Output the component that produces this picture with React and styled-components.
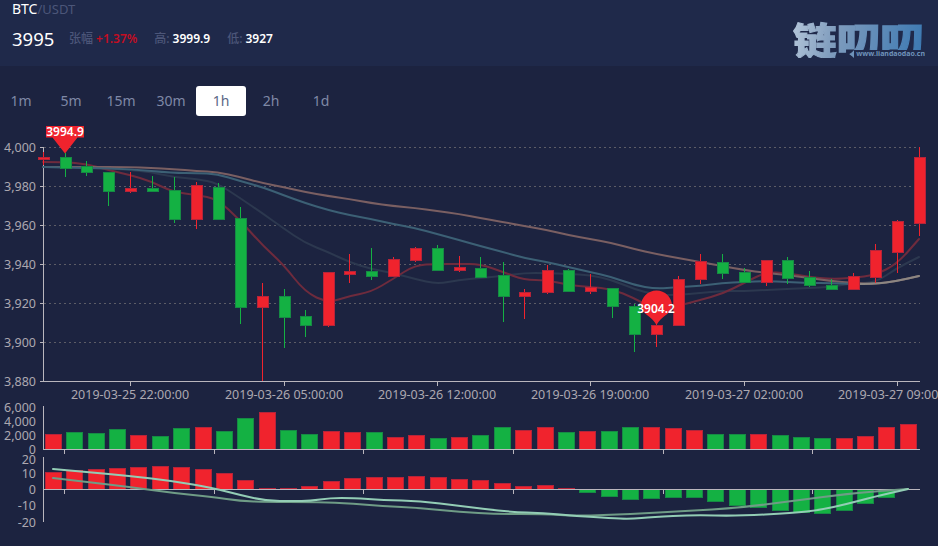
import React from "react";
import styled, { createGlobalStyle } from "styled-components";

const RED = "#f0232d";
const GREEN = "#14b143";
const FONT = `"Noto Sans", "Noto Sans CJK SC", sans-serif`;

const GlobalStyle = createGlobalStyle`
  html, body {
    margin: 0;
    padding: 0;
    background: #1c2340;
    font-family: ${FONT};
    overflow: hidden;
  }
`;

const Page = styled.div`
  width: 938px;
  height: 546px;
  overflow: hidden;
  background: #1c2340;
`;
const Header = styled.header`
  height: 66px;
  box-sizing: border-box;
  padding: 0 12px;
  background: #1f294a;
  display: flex;
  justify-content: space-between;
`;
const Ticker = styled.div`
  display: flex;
  flex-direction: column;
`;
const Pair = styled.div`
  height: 19px;
  line-height: 18px;
  font-size: 14px;
  color: #fff;
  span {
    font-size: 13px;
    color: #4c5679;
  }
`;
const Stats = styled.div`
  margin-top: 8px;
  height: 22px;
  display: flex;
  align-items: center;
  font-size: 12px;
  color: #4c5679;
`;
const Price = styled.div`
  width: 57px;
  font-size: 18.5px;
  color: #fff;
`;
const Stat = styled.div`
  margin-right: 17px;
  font-weight: 500;
  b {
    font-weight: 600;
    margin-left: 3px;
    color: ${(p) => (p.$up ? "#c40d22" : "#fff")};
  }
`;
const Logo = styled.div`
  position: relative;
  margin: 20px 1px 0 0;
  width: 132px;
  height: 38px;
  overflow: hidden;
`;
const LogoMark = styled.div`
  width: fit-content;
  font-size: 37px;
  line-height: 38px;
  font-weight: 900;
  font-family: "Noto Sans CJK SC", sans-serif;
  white-space: nowrap;
  transform: scaleX(1.18);
  transform-origin: left center;
  -webkit-text-stroke: 1px transparent;
  background: linear-gradient(100deg, #b4c6da 0%, #7f9cbd 32%, #3a78b2 100%);
  -webkit-background-clip: text;
  background-clip: text;
  color: transparent;
`;
const LogoUrl = styled.div`
  position: absolute;
  right: 0;
  bottom: 0;
  font-size: 7px;
  line-height: 8px;
  font-weight: 700;
  color: #6f93bb;
  background: #1f294a;
  padding-left: 2px;
`;
const Toolbar = styled.nav`
  display: flex;
  margin: 20px 0 4px -4px;
`;
const Tab = styled.div`
  width: 50px;
  height: 30px;
  line-height: 30px;
  text-align: center;
  font-size: 14px;
  border-radius: 3px;
  color: ${(p) => (p.$active ? "#5b6686" : "#7f88a6")};
  background: ${(p) => (p.$active ? "#fff" : "transparent")};
`;
const Chart = styled.svg`
  display: block;
  overflow: visible;
`;
const AxisText = styled.text`
  font-size: 12.5px;
  fill: #aca8b0;
`;
const AxisLine = styled.path`
  fill: none;
  stroke: #b9b6bd;
  stroke-width: 1;
  shape-rendering: crispEdges;
`;
const GridLine = styled.line`
  stroke: #5c5c66;
  stroke-width: 1;
  stroke-dasharray: 2 3;
  shape-rendering: crispEdges;
`;
const Curve = styled.path`
  fill: none;
  stroke-width: 2;
  stroke-linejoin: round;
  stroke-linecap: round;
  stroke: ${(p) => p.$color};
`;
const Wick = styled.line`
  stroke: ${(p) => (p.$up ? RED : GREEN)};
  stroke-width: 1;
  shape-rendering: crispEdges;
`;
const Bar = styled.rect`
  fill: ${(p) => (p.$up ? RED : GREEN)};
  stroke: ${(p) => (p.$up ? "#b5243a" : "#168a45")};
  stroke-width: 1;
  shape-rendering: crispEdges;
`;
const PinShape = styled.path`
  fill: ${RED};
`;
const PinText = styled.text`
  font-size: 12px;
  font-weight: 600;
  fill: #fff;
  text-anchor: middle;
`;

const TABS = ["1m", "5m", "15m", "30m", "1h", "2h", "1d"];

// x, high, low, body top, body bottom, up
const CANDLES = [
  [43, 152, 165, 157, 159, 1], [65, 153, 177, 157, 168, 0], [86, 161, 176, 166, 172, 0],
  [108, 172, 206, 172, 191, 0], [130, 172, 193, 188, 191, 1], [152, 176, 192, 188, 191, 0],
  [174, 177, 223, 190, 219, 0], [196, 182, 229, 185, 219, 1], [218, 183, 220, 187, 219, 0],
  [240, 207, 324, 218, 307, 0], [262, 283, 381, 296, 307, 1], [284, 289, 348, 296, 317, 0],
  [305, 310, 337, 316, 325, 0], [328, 272, 327, 272, 325, 1], [349, 254, 283, 271, 274, 1],
  [371, 248, 280, 271, 276, 0], [393, 257, 276, 259, 276, 1], [415, 247, 262, 248, 260, 1],
  [437, 245, 270, 248, 270, 0], [459, 256, 272, 267, 270, 1], [480, 257, 277, 268, 277, 0],
  [503, 262, 322, 275, 296, 0], [524, 289, 319, 292, 296, 1], [547, 265, 294, 270, 292, 1],
  [568, 269, 291, 270, 291, 0], [590, 274, 294, 287, 291, 1], [612, 288, 318, 288, 306, 0],
  [634, 304, 352, 306, 334, 0], [656, 324, 347, 325, 334, 1], [678, 276, 326, 279, 325, 1],
  [700, 254, 284, 261, 279, 1], [722, 254, 279, 262, 273, 0], [744, 268, 282, 272, 282, 0],
  [766, 260, 286, 260, 282, 1], [787, 257, 284, 260, 278, 0], [809, 271, 287, 277, 285, 0],
  [831, 279, 289, 285, 289, 0], [853, 273, 289, 276, 289, 1], [875, 244, 283, 250, 277, 1],
  [897, 220, 273, 221, 252, 1], [919, 147, 236, 157, 223, 1],
];

const MA_LINES = [
  {
    color: "#2c384f",
    points: "43,167 87,167 130,170 150,172 173,177 197,179 217,183 240,198 262,213 283,228 305,243 328,252 349,262 371,269 393,273 415,279 437,284 459,280 480,278 503,276 524,273 547,273 568,274 590,275 612,280 634,289 656,295 678,295 700,293 722,291 744,291 766,290 787,289 809,288 831,287 853,283 875,283 897,268 919,257",
  },
  {
    color: "#6e2b3d",
    points: "43,162 63,162 87,164 108,170 130,175 150,181 173,192 197,195 217,199 240,220 262,245 283,264 305,292 328,303 349,296 371,292 393,279 415,265 437,264 459,264 480,264 503,272 524,280 547,280 568,285 590,287 612,289 634,298 656,310 678,306 700,300 722,294 744,283 766,272 787,273 809,277 831,279 853,278 875,275 897,264 919,239",
  },
  {
    color: "#7a5f62",
    points: "43,167 87,167 130,167 150,168 173,169 197,171 217,172 240,177 262,183 283,187 305,192 328,196 349,199 371,203 393,206 415,208 437,211 459,214 480,218 503,222 524,226 547,230 568,235 590,239 612,243 634,249 656,254 678,258 700,262 722,266 744,270 766,273 787,275 809,278 831,281 853,283 875,284 897,281 919,276",
  },
  {
    color: "#3c6075",
    points: "43,167 87,168 130,169 173,173 197,173 217,174 240,181 262,187 283,195 305,203 328,210 349,215 371,219 393,224 415,228 437,234 459,240 480,246 503,252 524,258 547,262 568,267 590,272 612,277 634,285 656,289 678,287 700,286 722,283 744,282 766,281 787,282 809,283 831,283 853,284",
  },
  { color: "#8c8682", points: "853,284 875,284 897,281 919,276" },
];

const PRICE_TICKS = ["4,000", "3,980", "3,960", "3,940", "3,920", "3,900", "3,880"];
const TIME_TICKS = [
  [130, "2019-03-25 22:00:00"],
  [284, "2019-03-26 05:00:00"],
  [437, "2019-03-26 12:00:00"],
  [590, "2019-03-26 19:00:00"],
  [744, "2019-03-27 02:00:00"],
  [897, "2019-03-27 09:00:00"],
];
const SUB_TICKS = [64, 214, 363, 513, 663, 812];

// bar top y, up
const VOLUME = [
  [434, 1], [432, 0], [433, 0], [429, 0], [435, 1], [436, 0], [428, 0], [427, 1], [431, 0], [418, 0],
  [412, 1], [430, 0], [434, 0], [431, 1], [432, 1], [432, 0], [437, 1], [435, 1], [438, 0], [437, 1],
  [435, 0], [427, 0], [430, 1], [427, 1], [432, 0], [431, 1], [431, 0], [427, 0], [427, 1], [428, 1],
  [430, 1], [434, 0], [434, 0], [434, 1], [435, 0], [437, 0], [438, 0], [438, 1], [436, 1], [427, 1], [424, 1],
];

// signed height in px, positive is above the zero line
const MACD = [
  17, 19, 20, 21, 22, 23, 22, 20, 16, 9, 1, 1, 3, 8, 11, 12, 12, 13, 12, 10, 9, 6, 3, 4, 1,
  -3, -7, -10, -9, -8, -8, -12, -16, -18, -21, -23, -24, -21, -14, -8,
];
const DIF = "53,469 87,472 130,476 173,481 213,488 240,495 267,501 293,501 310,501 330,498 353,498 383,500 420,501 460,506 510,512 543,513 577,516 610,518 630,519 653,517 693,515 737,516 793,513 820,510 847,504 873,497 908,489";
const DEA = "53,478 87,482 130,487 173,493 213,497 240,501 267,502 310,502 343,503 383,506 420,508 460,512 497,514 543,514 577,516 630,514 687,511 737,508 793,501 853,493 908,489";

const barX = (i) => Math.round(45 + i * 21.37);

// rounds the corners of a "x,y x,y" list through the midpoints
function smooth(points) {
  const pts = points.split(" ").map((p) => p.split(",").map(Number));
  let d = `M${pts[0][0]} ${pts[0][1]}`;
  for (let i = 1; i < pts.length - 1; i++) {
    const mx = (pts[i][0] + pts[i + 1][0]) / 2;
    const my = (pts[i][1] + pts[i + 1][1]) / 2;
    d += `Q${pts[i][0]} ${pts[i][1]} ${mx} ${my}`;
  }
  const last = pts[pts.length - 1];
  return `${d}L${last[0]} ${last[1]}`;
}

function PriceChart() {
  return (
    <Chart width="938" height="280" viewBox="0 120 938 280">
      {PRICE_TICKS.map((label, i) => {
        const y = 147.5 + i * 39;
        return (
          <g key={label}>
            {i < 6 && <GridLine x1="44" x2="920" y1={y} y2={y} />}
            <AxisText x="36" y={y + 4.5} textAnchor="end">{label}</AxisText>
          </g>
        );
      })}
      <AxisLine d="M40 147.5H43.5V381.5H920M40 186.5H43M40 225.5H43M40 264.5H43M40 303.5H43M40 342.5H43M40 381.5H43" />
      {MA_LINES.map((line) => (
        <Curve key={line.color} $color={line.color} d={smooth(line.points)} />
      ))}
      {CANDLES.map(([x, high, low, top, bottom, up]) => (
        <g key={x}>
          <Wick $up={up} x1={x + 0.5} x2={x + 0.5} y1={high} y2={low} />
          <Bar $up={up} x={x - 5} y={top + 0.5} width="11" height={bottom - top} />
        </g>
      ))}
      {TIME_TICKS.map(([x, label]) => (
        <g key={label}>
          <AxisLine d={`M${x + 0.5} 381V386`} />
          <AxisText x={x} y="399" textAnchor="middle">{label}</AxisText>
        </g>
      ))}
      <PinShape d="M46 126H84V137.5H77.5L65 153.5L52.5 137.5H46Z" />
      <PinText x="65" y="136">3994.9</PinText>
      <PinShape d="M656.5 325C652 316 641 313.5 641 306A15.5 15.5 0 0 1 672 306C672 313.5 661 316 656.5 325Z" />
      <PinText x="656" y="313">3904.2</PinText>
    </Chart>
  );
}

function VolumeChart() {
  return (
    <Chart width="938" height="56" viewBox="0 400 938 56">
      {[["6,000", 411.5], ["4,000", 426], ["2,000", 440], ["0", 453.5]].map(([label, y]) => (
        <AxisText key={label} x="36" y={y} textAnchor="end">{label}</AxisText>
      ))}
      {VOLUME.map(([top, up], i) => (
        <Bar key={i} $up={up} x={barX(i) + 0.5} y={top + 0.5} width="16" height={449 - top} />
      ))}
      <AxisLine d="M43.5 406V449.5H920" />
      {SUB_TICKS.map((x) => (
        <AxisLine key={x} d={`M${x + 0.5} 450V454`} />
      ))}
    </Chart>
  );
}

function MacdChart() {
  return (
    <Chart width="938" height="90" viewBox="0 456 938 90">
      {[["20", 463.5], ["10", 478], ["0", 494], ["-10", 510], ["-20", 526.5]].map(([label, y]) => (
        <AxisText key={label} x="36" y={y} textAnchor="end">{label}</AxisText>
      ))}
      {MACD.map((h, i) => (
        <Bar
          key={i}
          $up={h > 0}
          x={barX(i) + 0.5}
          y={h > 0 ? 489 - h + 0.5 : 489.5}
          width="16"
          height={Math.abs(h)}
        />
      ))}
      <AxisLine d="M43.5 457V521.5M43.5 489.5H920" />
      {SUB_TICKS.map((x) => (
        <AxisLine key={x} d={`M${x + 0.5} 490V494`} />
      ))}
      <Curve $color="#6f9c86" d={smooth(DEA)} />
      <Curve $color="#93cdb5" d={smooth(DIF)} />
    </Chart>
  );
}

export default function App() {
  return (
    <Page>
      <GlobalStyle />
      <Header>
        <Ticker>
          <Pair>BTC<span>/USDT</span></Pair>
          <Stats>
            <Price>3995</Price>
            <Stat $up>张幅<b>+1.37%</b></Stat>
            <Stat>高:<b>3999.9</b></Stat>
            <Stat>低:<b>3927</b></Stat>
          </Stats>
        </Ticker>
        <Logo>
          <LogoMark>链叨叨</LogoMark>
          <LogoUrl>www.liandaodao.cn</LogoUrl>
        </Logo>
      </Header>
      <Toolbar>
        {TABS.map((t) => (
          <Tab key={t} $active={t === "1h"}>{t}</Tab>
        ))}
      </Toolbar>
      <PriceChart />
      <VolumeChart />
      <MacdChart />
    </Page>
  );
}
